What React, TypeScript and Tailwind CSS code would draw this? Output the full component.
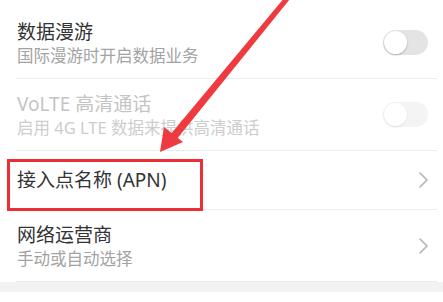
import React from 'react';

const FONT = { fontFamily: '"Noto Sans", "Noto Sans CJK SC", sans-serif' };

const Toggle: React.FC<{ faded?: boolean }> = ({ faded }) => (
    <div
        className={`w-[45px] h-[25px] rounded-full bg-[#e4e4e4] p-[1px] flex items-center ${
            faded ? 'opacity-40' : ''
        }`}
    >
        <div className="w-[23px] h-[23px] rounded-full bg-white shadow-[0_1px_2px_rgba(0,0,0,0.25)]" />
    </div>
);

const Chevron = () => (
    <svg width="12" height="18" viewBox="0 0 12 18" className="mr-[8px]">
        <path
            d="M3 2 L10 9 L3 16"
            fill="none"
            stroke="#b4b4b4"
            strokeWidth="1.6"
            strokeLinecap="round"
            strokeLinejoin="round"
        />
    </svg>
);

interface RowProps {
    title: string;
    subtitle?: string;
    disabled?: boolean;
    right: React.ReactNode;
}

const Row: React.FC<RowProps> = ({ title, subtitle, disabled, right }) => (
    <div
        className={`flex items-center justify-between ml-[16px] mr-[6px] border-b border-[#ececec] ${
            subtitle ? 'h-[72px]' : 'h-[59px]'
        }`}
    >
        <div className="flex flex-col pl-[1px]">
            <span
                className={`text-[19px] leading-[22px] ${
                    disabled ? 'text-[#c4c4c4]' : 'text-[#333333]'
                }`}
            >
                {title}
            </span>
            {subtitle && (
                <span
                    className={`text-[16.5px] leading-[18px] mt-[4px] ${
                        disabled ? 'text-[#cdcdcd]' : 'text-[#a3a3a3]'
                    }`}
                >
                    {subtitle}
                </span>
            )}
        </div>
        {right}
    </div>
);

export default function App() {
    return (
        <div className="relative w-[443px] h-[302px] bg-white overflow-hidden" style={FONT}>
            <div className="h-[7px]" />
            <Row title="数据漫游" subtitle="国际漫游时开启数据业务" right={<div className="mr-[9px]"><Toggle /></div>} />
            <Row
                title="VoLTE 高清通话"
                subtitle="启用 4G LTE 数据来提供高清通话"
                disabled
                right={<div className="mr-[9px]"><Toggle faded /></div>}
            />
            <Row title="接入点名称 (APN)" right={<Chevron />} />
            <Row title="网络运营商" subtitle="手动或自动选择" right={<Chevron />} />
            <div className="h-[10px] bg-[#f1f2f1]" />

            {/* highlight box */}
            <div className="absolute left-[7px] top-[159px] w-[196px] h-[52px] border-[3px] border-[#ec2f36]" />

            {/* arrow */}
            <svg className="absolute left-0 top-0" width="443" height="302">
                <polygon
                    points="290,-9 294,-6 176,140 170,135"
                    fill="#ef3a3f"
                />
                <polygon points="160,152 164,127 183,142" fill="#ef3a3f" />
            </svg>
        </div>
    );
}
